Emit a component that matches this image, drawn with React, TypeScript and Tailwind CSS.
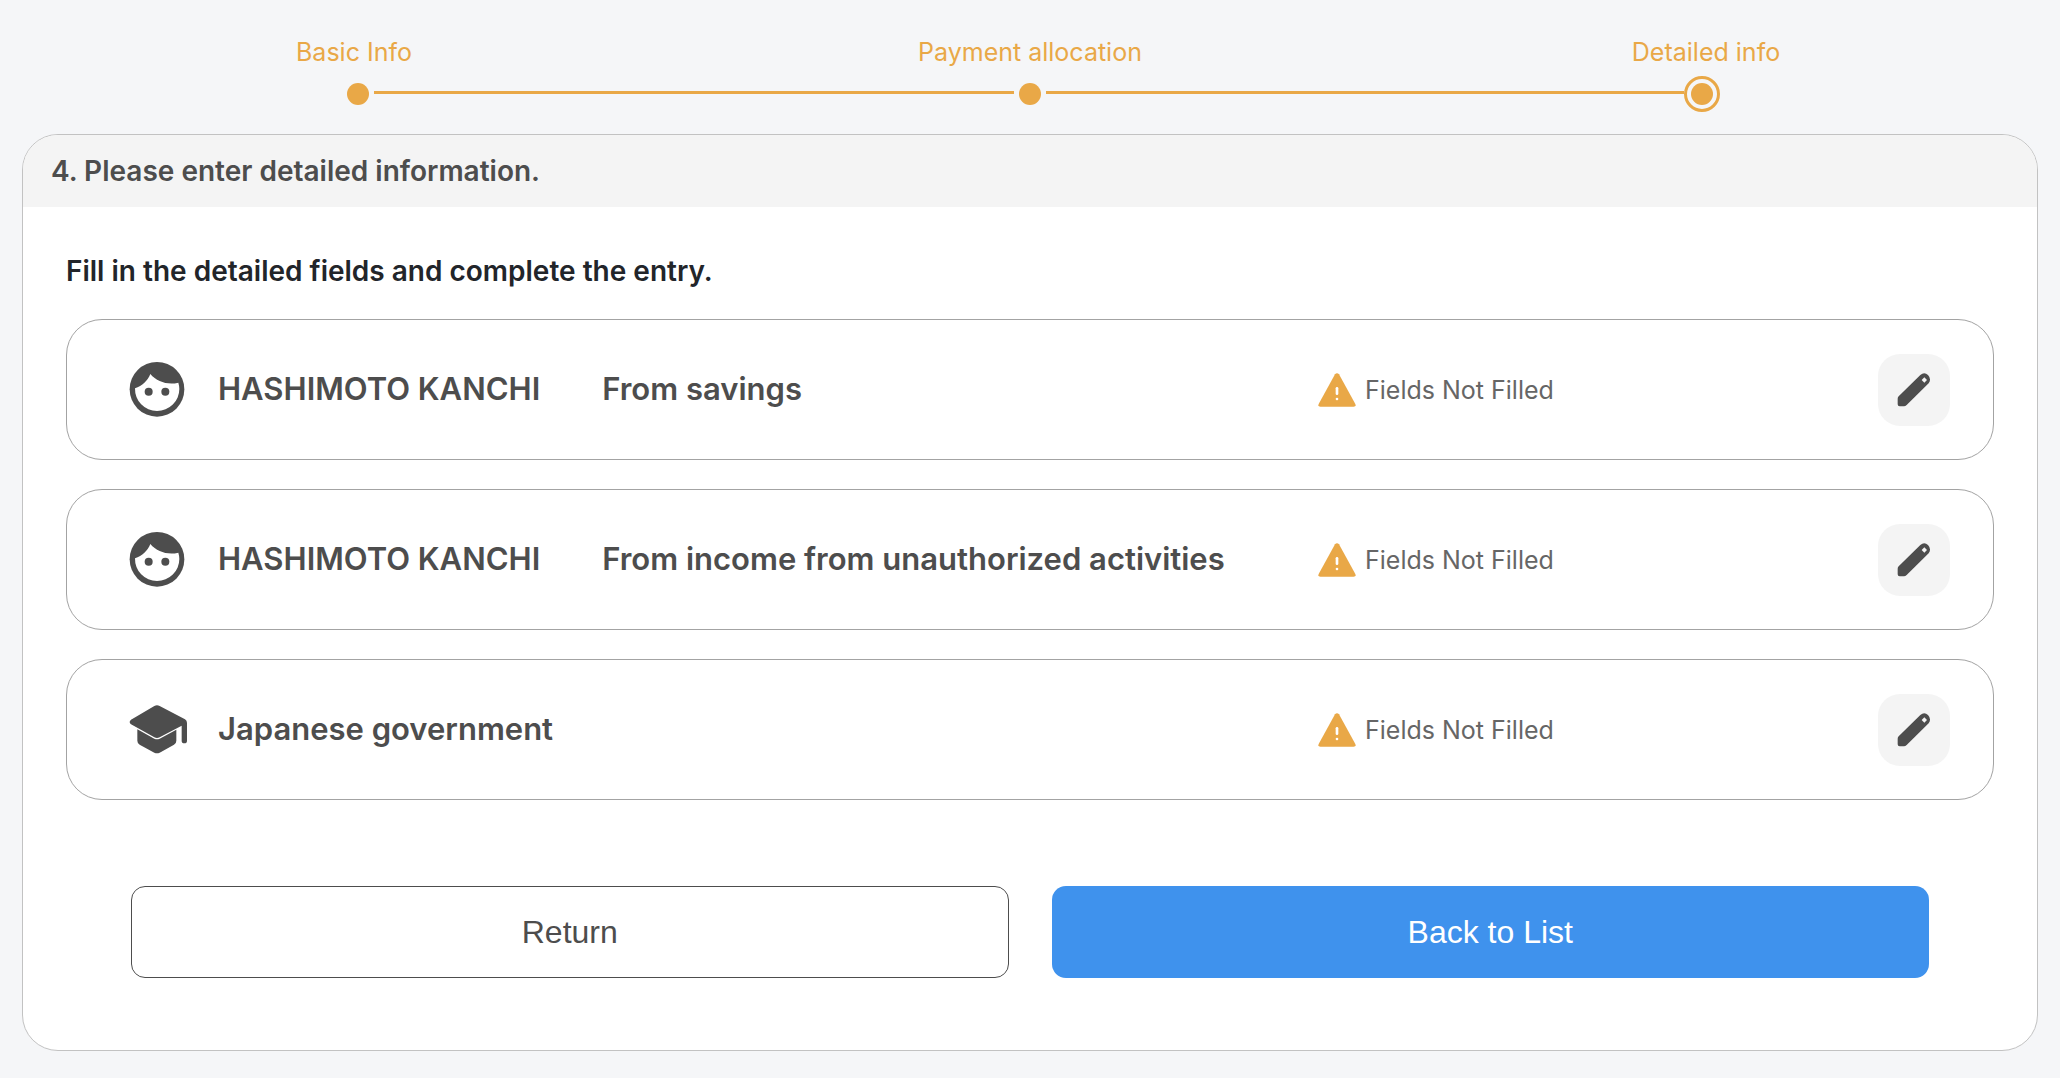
import { useState } from "react";

type EntryKind = "person" | "organization";

interface Entry {
  id: number;
  kind: EntryKind;
  name: string;
  source?: string;
}

const steps = ["Basic Info", "Payment allocation", "Detailed info"];

const entries: Entry[] = [
  { id: 1, kind: "person", name: "HASHIMOTO KANCHI", source: "From savings" },
  {
    id: 2,
    kind: "person",
    name: "HASHIMOTO KANCHI",
    source: "From income from unauthorized activities",
  },
  { id: 3, kind: "organization", name: "Japanese government" },
];

function FaceIcon() {
  return (
    <svg viewBox="0 0 174 168" className="w-[58px] h-14" aria-hidden="true">
      <circle cx="84" cy="82" r="82" fill="#4d4d4d" />
      <path
        d="M18 79C40 71 56 56 64 36C84 59 116 70 148 62C150 69 151 75 151 81A67 66 0 0 1 84 147A67 66 0 0 1 18 79Z"
        fill="#fff"
      />
      <circle cx="59" cy="89" r="12" fill="#4d4d4d" />
      <circle cx="109" cy="89" r="12" fill="#4d4d4d" />
    </svg>
  );
}

function SchoolIcon() {
  return (
    <svg viewBox="0 0 174 168" className="w-[58px] h-14" aria-hidden="true">
      <g fill="#4d4d4d">
        <path d="M76 12Q84 8 92 12L168 52Q174 56 174 63V116Q174 124 166 124Q158 124 158 116V71L92 106Q84 110 76 106L6 67Q-2 60 6 53Z" />
        <path d="M25 82L76 110Q84 114 92 110L142 83V116Q142 124 135 128L92 152Q84 156 76 152L32 128Q25 124 25 116Z" />
      </g>
    </svg>
  );
}

function WarningIcon() {
  return (
    <svg viewBox="0 0 114 102" className="w-[38px] h-[34px]" aria-hidden="true">
      <path
        d="M51 4Q57 -3 63 4L112 93Q115 101 107 101H7Q-1 101 2 93Z"
        fill="#e9a847"
      />
      <rect x="53" y="42" width="8" height="24" rx="4" fill="#fff" />
      <circle cx="57" cy="78" r="4" fill="#fff" />
    </svg>
  );
}

function PencilIcon() {
  return (
    <svg viewBox="0 0 102 102" className="size-[34px]" aria-hidden="true">
      <path
        d="M8 100Q2 100 2 94V77Q2 73 5 70L70 6Q82 -4 93 6Q104 18 95 31L29 96Q25 100 21 100Z"
        fill="#4d4d4d"
      />
      <path d="M82 13L90 21L82 29L74 21Z" fill="#f4f4f4" />
    </svg>
  );
}

function Stepper() {
  const current = steps.length - 1;

  return (
    <nav aria-label="Progress">
      <ol className="grid grid-cols-3 px-4 text-center text-[25px] leading-8 text-[#e9a847]">
        {steps.map((step) => (
          <li key={step}>{step}</li>
        ))}
      </ol>
      <div className="mt-2 grid grid-cols-3 px-[22px]" aria-hidden="true">
        {steps.map((step, index) => (
          <div key={step} className="flex h-9 items-center">
            <div
              className={`mb-[3px] h-[3px] flex-1 ${
                index > 0 ? "bg-[#e9a847]" : ""
              }`}
            />
            {index === current ? (
              <div className="flex size-9 items-center justify-center rounded-full border-3 border-[#e9a847]">
                <div className="size-[22px] rounded-full bg-[#e9a847]" />
              </div>
            ) : (
              <div className="mx-[5px] size-[22px] rounded-full bg-[#e9a847]" />
            )}
            <div
              className={`mb-[3px] h-[3px] flex-1 ${
                index < current ? "bg-[#e9a847]" : ""
              }`}
            />
          </div>
        ))}
      </div>
    </nav>
  );
}

function EntryRow({ entry, onEdit }: { entry: Entry; onEdit: () => void }) {
  return (
    <li className="flex h-[141px] items-center rounded-[36px] border border-[#a3a3a3] pr-[43px] pl-[62px]">
      <div className="flex flex-1 items-center">
        <div className="w-[89px]">
          {entry.kind === "person" ? <FaceIcon /> : <SchoolIcon />}
        </div>
        <div className="flex gap-[62px] text-[31px] font-semibold whitespace-nowrap text-[#4d4d4d]">
          <span>{entry.name}</span>
          {entry.source && <span>{entry.source}</span>}
        </div>
      </div>
      <div className="flex w-[560px] items-center gap-[9px] text-[25px] leading-9 text-[#666]">
        <WarningIcon />
        <span>Fields Not Filled</span>
      </div>
      <button
        type="button"
        onClick={onEdit}
        aria-label={`Edit ${entry.name}`}
        className="flex size-[72px] items-center justify-center rounded-[22px] bg-[#f4f4f4]"
      >
        <PencilIcon />
      </button>
    </li>
  );
}

export default function App() {
  const [, setEditing] = useState<number | null>(null);

  return (
    <div className="min-h-screen bg-[#f5f6f8] pt-9 pb-[27px] font-['Inter','Liberation_Sans',sans-serif]">
      <Stepper />

      <main className="mx-[22px] mt-[22px] overflow-hidden rounded-[36px] border border-[#c2c2c2] bg-white">
        <h1 className="flex h-[72px] items-center bg-[#f4f4f4] px-7 text-[28px] font-semibold text-[#4d4d4d]">
          4. Please enter detailed information.
        </h1>

        <div className="px-[43px] pt-11 pb-[72px]">
          <h2 className="text-[28px] leading-10 font-semibold text-[#22252a]">
            Fill in the detailed fields and complete the entry.
          </h2>

          <ul className="mt-7 flex flex-col gap-[29px]">
            {entries.map((entry) => (
              <EntryRow
                key={entry.id}
                entry={entry}
                onEdit={() => setEditing(entry.id)}
              />
            ))}
          </ul>

          {/* Actions */}
          <div className="mt-[86px] grid grid-cols-2 gap-[43px] px-[65px] font-['Liberation_Sans',Arial,sans-serif] text-[32px]">
            <button
              type="button"
              className="h-[92px] rounded-[14px] border border-[#4d4d4d] text-[#4d4d4d]"
            >
              Return
            </button>
            <button
              type="button"
              className="h-[92px] rounded-[14px] bg-[#3f92ed] text-white"
            >
              Back to List
            </button>
          </div>
        </div>
      </main>
    </div>
  );
}
